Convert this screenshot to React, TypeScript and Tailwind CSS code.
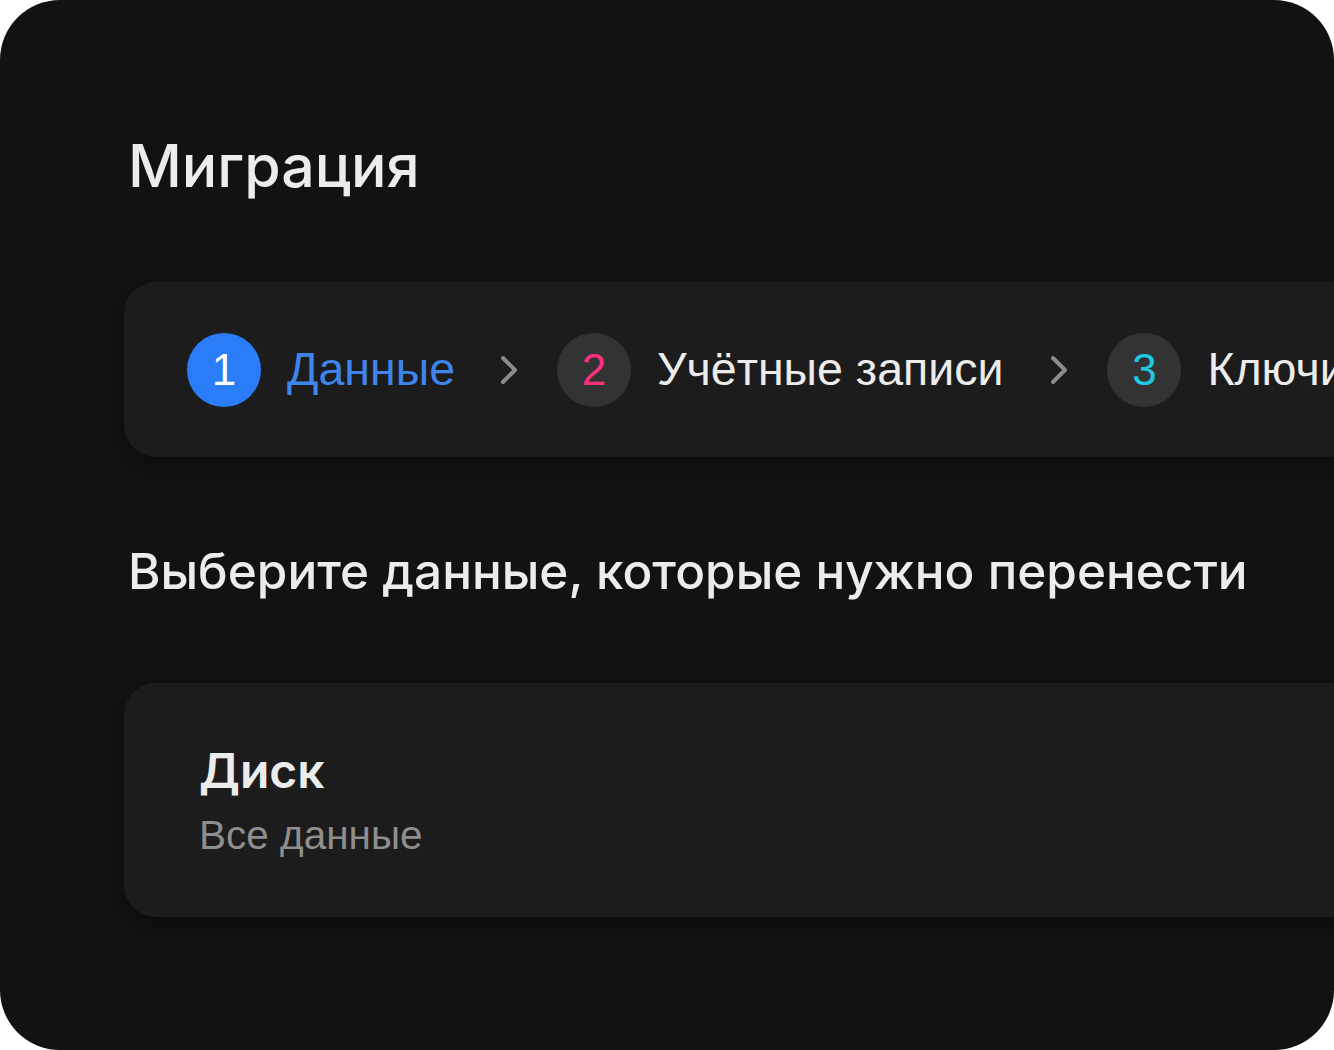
import React from "react";

const display = { fontFamily: "Inter, 'Open Sans', sans-serif" };
const body = { fontFamily: "'Liberation Sans', Arial, sans-serif" };

function Chevron() {
  return (
    <svg width="20" height="32" viewBox="0 0 20 32" className="shrink-0" aria-hidden="true">
      <path d="M4 4 L16 16 L4 28" fill="none" stroke="#8c8c8c" strokeWidth="4" strokeLinecap="round" strokeLinejoin="round" />
    </svg>
  );
}

function Step({ n, label, active, numColor }: { n: number; label: string; active?: boolean; numColor: string }) {
  return (
    <div className="flex shrink-0 items-center gap-[26px]">
      <div
        className={`flex h-[74px] w-[74px] items-center justify-center rounded-full text-[44px] ${
          active ? "bg-[#2a7cf7]" : "bg-[#333333]"
        }`}
        style={{ ...body, color: numColor }}
      >
        {n}
      </div>
      <span className={`whitespace-nowrap text-[46.5px] ${active ? "text-[#3f84ea]" : "text-[#ececec]"}`} style={body}>
        {label}
      </span>
    </div>
  );
}

export default function App() {
  return (
    <div className="h-[1050px] w-[1334px] bg-white">
      <div className="flex h-full flex-col overflow-hidden rounded-[60px] bg-[#121212] pl-[124px]">
        <h1 className="ml-1 mt-[126px] text-[59px] font-medium leading-[80px] text-[#ececec]" style={display}>
          Миграция
        </h1>

        <div className="mt-[76px] flex h-[175px] w-[1400px] shrink-0 items-center rounded-[32px] bg-[#1c1c1c] pl-[63px] shadow-[0_8px_24px_rgba(0,0,0,0.35)]">
          <Step n={1} label="Данные" active numColor="#ffffff" />
          <div className="ml-[44px] mr-[38px]">
            <Chevron />
          </div>
          <Step n={2} label="Учётные записи" numColor="#ff2e7e" />
          <div className="ml-[46px] mr-[38px]">
            <Chevron />
          </div>
          <Step n={3} label="Ключи" numColor="#1fc8e3" />
        </div>

        <h2 className="ml-1 mt-[82px] whitespace-nowrap text-[49.5px] font-medium leading-[64px] text-[#ececec]" style={display}>
          Выберите данные, которые нужно перенести
        </h2>

        <div className="mt-[80px] flex h-[234px] w-[1400px] shrink-0 flex-col justify-center rounded-[32px] bg-[#1c1c1c] pl-[75px] shadow-[0_8px_24px_rgba(0,0,0,0.35)]">
          <div className="text-[48px] font-semibold leading-[60px] text-[#ececec]" style={display}>
            Диск
          </div>
          <div className="mt-[10px] text-[40.5px] leading-[48px] text-[#8e8e8e]" style={body}>
            Все данные
          </div>
        </div>
      </div>
    </div>
  );
}
